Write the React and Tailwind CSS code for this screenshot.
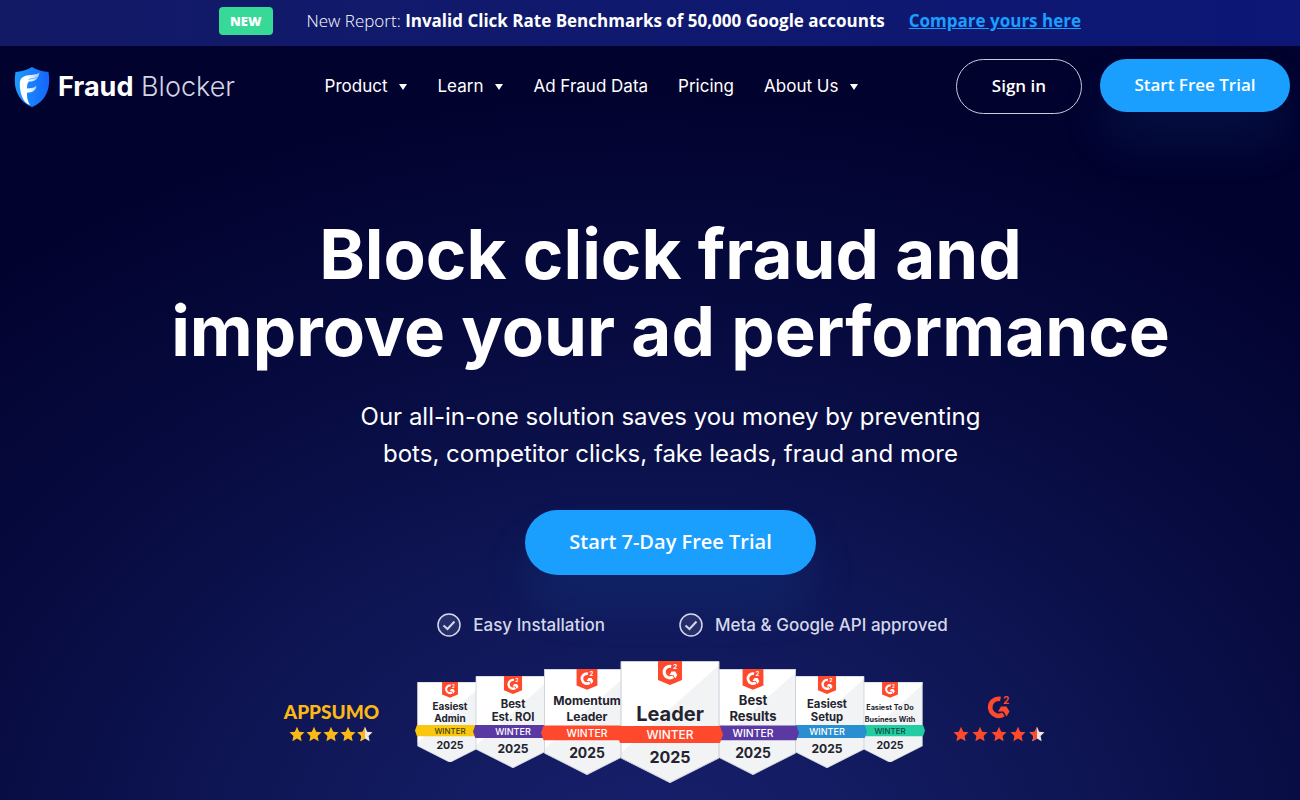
import React from 'react'

const navItems = [
  { label: 'Product', menu: true },
  { label: 'Learn', menu: true },
  { label: 'Ad Fraud Data' },
  { label: 'Pricing' },
  { label: 'About Us', menu: true },
]

const awards = [
  { lines: ['Easiest', 'Admin'], size: 15, ribbon: '#f9c80e', ink: '#4a3f0a', box: 'w-[70px] z-10' },
  { lines: ['Best', 'Est. ROI'], size: 15, ribbon: '#5a39a2', ink: '#ffffff', box: 'w-20 -ml-3 z-20' },
  { lines: ['Momentum', 'Leader'], size: 14, ribbon: '#ff492c', ink: '#ffffff', box: 'w-[92px] -ml-3 z-30' },
  { lines: ['Leader'], size: 20, ribbon: '#ff492c', ink: '#ffffff', box: 'w-[106px] -ml-4 z-40' },
  { lines: ['Best', 'Results'], size: 15, ribbon: '#5a39a2', ink: '#ffffff', box: 'w-[92px] -ml-4 z-30' },
  { lines: ['Easiest', 'Setup'], size: 15, ribbon: '#2a8fd0', ink: '#ffffff', box: 'w-20 -ml-3 z-20' },
  { lines: ['Easiest To Do', 'Business With'], size: 11, ribbon: '#23cca2', ink: '#0c4a3a', box: 'w-[70px] -ml-3 z-10' },
]

function ShieldLogo() {
  return (
    <svg viewBox="0 0 36 40" className="w-9 h-10" aria-hidden="true">
      <defs>
        <linearGradient id="shield" x1="0" y1="0" x2="1" y2="0">
          <stop offset="0" stopColor="#1d9bff" />
          <stop offset="1" stopColor="#1465ff" />
        </linearGradient>
        <linearGradient id="fold" x1="0" y1="0" x2="1" y2="0">
          <stop offset="0.4" stopColor="#ffffff" />
          <stop offset="1" stopColor="#9cc8ff" />
        </linearGradient>
      </defs>
      <path d="M18 0c5 3 11 4.500 16.500 5 1.200 8 1 15-2 21.500C29.500 33 24.500 37.500 18 40 11.500 37.500 6.500 33 3.500 26.500.5 20 .3 13 1.500 5 7 4.500 13 3 18 0z" fill="url(#shield)" />
      <path d="M25.500 5.500c-3 2.500-7 2.200-11 2.700C9.500 9 6 11 5.800 16c-.2 6.500 1 12.500 4.200 17.500 1.500 2 3.500 3.700 6 4.500-2.500-4-3.300-8-3-12.300 5 0 8.500-1.700 9.500-6.700-2.500 2.200-6 2-9.500 2.500 0-3.500.3-5.300 2-7 5.500.3 9-2 10.500-9z" fill="url(#fold)" />
      <path d="M23.500 10c-2.500 1.600-6 1.200-9 2.600" fill="none" stroke="#5aa6ff" strokeWidth=".8" />
    </svg>
  )
}

function G2Mark({ color }) {
  return (
    <g>
      <path d="M13.500 5A8.500 8.500 0 1 0 16.500 20.300" fill="none" stroke={color} strokeWidth="4.500" />
      <path d="M14 12.500h5.500l3 5-3 5-3-5H11z" fill={color} />
      <text x="16" y="9.500" fontSize="10" fontWeight="700" fill={color}>2</text>
    </g>
  )
}

function AwardBadge({ lines, size, ribbon, ink, box }) {
  return (
    <svg viewBox="0 0 106 122" className={`shrink-0 font-['Inter',sans-serif] ${box}`} textAnchor="middle">
      <path d="M4 0h98v97l-49 25L4 97z" fill="#f2f3f5" />
      <path d="M4 0h98v4L4 92z" fill="#ffffff" />
      <path d="M4 .5h98v96.500L53 121.500 4 97z" fill="none" stroke="#c9ccd6" />
      <path d="M41 0h24v19l-12 5-12-5z" fill="#ff492c" />
      <g transform="translate(45 2) scale(.68)" textAnchor="start">
        <G2Mark color="#ffffff" />
      </g>
      {lines.map((line, i) => (
        <text key={line} x="53" y={lines.length === 1 ? 60 : 42 + i * 18} fontSize={size} fontWeight="700" fill="#23242f">{line}</text>
      ))}
      <path d="M3 65h100l3 8.500-3 8.500H3l-3-8.500z" fill={ribbon} />
      <text x="53" y="78" fontSize="12" fontWeight="500" fill={ink}>WINTER</text>
      <text x="53" y="102" fontSize="16" fontWeight="700" fill="#23242f">2025</text>
    </svg>
  )
}

const STAR = 'M8 .8l2.200 4.900 5.300.6-3.900 3.600 1 5.300L8 12.600l-4.600 2.600 1-5.300L.5 6.300l5.300-.6z'

function Stars({ color, gap }) {
  return (
    <div className={`flex ${gap}`} role="img" aria-label="4.5 out of 5 stars">
      {[0, 1, 2, 3, 4].map(i => (
        <svg key={i} viewBox="0 0 16 16" className="w-4 h-4">
          <path d={STAR} fill={i === 4 ? '#f0e6e6' : color} />
          {i === 4 && <path d="M8 .8v11.800l-4.600 2.600 1-5.300L.5 6.300l5.300-.6z" fill={color} />}
        </svg>
      ))}
    </div>
  )
}

function Feature({ children }) {
  return (
    <li className="flex items-center gap-3">
      <svg viewBox="0 0 24 24" className="w-6 h-6" fill="none" stroke="#d5d8ea">
        <circle cx="12" cy="12" r="11" strokeWidth="1.500" fill="#262e6c" />
        <path d="M6.500 12.500l4 3.500 7-7.500" strokeWidth="2" />
      </svg>
      {children}
    </li>
  )
}

export default function App() {
  return (
    <div className="min-h-screen overflow-hidden text-white font-['Inter',sans-serif] bg-[#02022e] bg-[radial-gradient(ellipse_80%_100%_at_50%_110%,#18216f_0%,#101859_35%,#070b40_68%,#02022e_100%)]">
      <div className="flex items-center justify-center h-[46px] pb-1 bg-linear-to-r from-[#121a66] to-[#0c1776] font-['Open_Sans',sans-serif] text-[17px]">
        <span className="px-[11px] py-1 mr-[34px] rounded-sm bg-[#36d996] text-[13px] leading-5 font-extrabold">NEW</span>
        <p className="mr-6 font-light">New Report: <strong className="font-bold">Invalid Click Rate Benchmarks of 50,000 Google accounts</strong></p>
        <a href="#report" className="font-bold text-[#1a9fff] underline">Compare yours here</a>
      </div>

      <header className="flex items-start justify-between pt-[13px] pl-[14px] pr-[10px]">
        <a href="#home" className="flex items-center gap-2 h-14 text-[27px]">
          <ShieldLogo />
          <span className="font-light text-[#d3d5e4]"><b className="font-bold text-white">Fraud</b> Blocker</span>
        </a>
        <nav className="flex items-center gap-[30px] h-14 pr-2 text-[17px]">
          {navItems.map(item => (
            <a key={item.label} href="#nav" className="flex items-center gap-3">
              {item.label}
              {item.menu && <svg viewBox="0 0 8 6" className="w-2 h-[6px]"><path d="M0 0h8L4 6z" fill="#ffffff" /></svg>}
            </a>
          ))}
        </nav>
        <div className="flex items-start gap-[18px] font-['Open_Sans',sans-serif] text-[17px] font-semibold">
          <button className="w-[126px] h-[55px] pb-[2px] rounded-full border border-[#c9cbdc]">Sign in</button>
          <button className="w-[190px] h-[53px] pb-[2px] rounded-full bg-[#1a9fff] shadow-[0_30px_50px_rgba(26,159,255,0.1)]">Start Free Trial</button>
        </div>
      </header>

      <main className="flex flex-col items-center pt-[101px] pl-[41px] text-center">
        <h1 className="text-[69px] leading-[77px] font-bold">Block click fraud and<br />improve your ad performance</h1>
        <p className="mt-7 text-2xl leading-[37px]">Our all-in-one solution saves you money by preventing<br />bots, competitor clicks, fake leads, fraud and more</p>
        <button className="w-[291px] h-[65px] pb-[2px] mt-[38px] rounded-full bg-[#1a9fff] font-['Open_Sans',sans-serif] text-xl font-semibold shadow-[0_30px_50px_rgba(26,159,255,0.1)]">Start 7-Day Free Trial</button>
        <ul className="flex gap-[74px] mt-[38px] ml-11 text-[17px] leading-6 font-medium text-[#d5d8ea]">
          <Feature>Easy Installation</Feature>
          <Feature>Meta &amp; Google API approved</Feature>
        </ul>
        <div className="flex items-center mt-6 -ml-3">
          <div className="flex flex-col items-center mr-9 pb-1 text-[#fcb916]">
            <span className="font-['Lato',sans-serif] text-[19px] leading-7 font-black">APPSUMO</span>
            <Stars color="#fcb916" gap="gap-px" />
          </div>
          {awards.map((award, i) => <AwardBadge key={i} {...award} />)}
          <div className="flex flex-col items-center gap-[6px] ml-7 pb-2">
            <svg viewBox="0 0 24 26" className="w-6 h-[26px]"><G2Mark color="#ff492c" /></svg>
            <Stars color="#ff492c" gap="gap-[3px]" />
          </div>
        </div>
      </main>
    </div>
  )
}
